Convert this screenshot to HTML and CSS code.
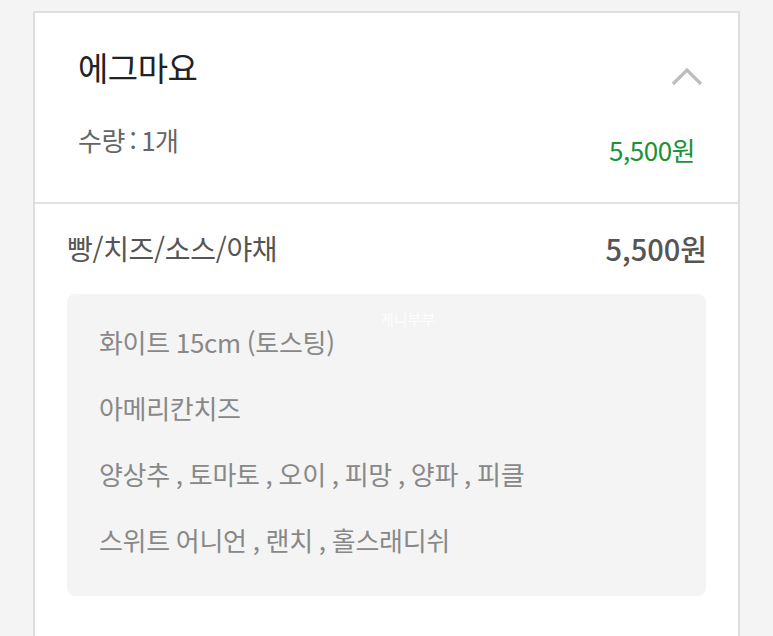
FILE: index.html
```html
<!DOCTYPE html>
<html lang="ko">
<head>
    <meta charset="UTF-8">
    <meta name="viewport" content="width=device-width, initial-scale=1.0">
    <title>주문 상세</title>
    <link rel="stylesheet" href="styles.css">
</head>
<body>
    <div class="order-card">
        <div class="summary">
            <div class="summary-top">
                <h2 class="menu-name">에그마요</h2>
                <svg class="toggle" width="34" height="22" viewBox="0 0 34 22">
                    <polyline points="3,19 17,5 31,19" fill="none" stroke="#bdbdbd" stroke-width="3.2"/>
                </svg>
            </div>
            <div class="summary-bottom">
                <p class="qty">수량 : 1개</p>
                <p class="total">5,500원</p>
            </div>
        </div>

        <div class="detail">
            <div class="detail-head">
                <span class="detail-title">빵/치즈/소스/야채</span>
                <span class="detail-price">5,500원</span>
            </div>
            <div class="options">
                <span class="watermark">게니부부</span>
                <p>화이트 15cm (토스팅)</p>
                <p>아메리칸치즈</p>
                <p>양상추 , 토마토 , 오이 , 피망 , 양파 , 피클</p>
                <p>스위트 어니언 , 랜치 , 홀스래디쉬</p>
            </div>
        </div>
    </div>
</body>
</html>
```

FILE: styles.css
```css
body {
    font-family: "Noto Sans CJK KR", "Noto Sans", sans-serif;
    margin: 0;
    padding: 0;
    background-color: #f4f4f4;
    overflow: hidden;
}
.order-card {
    margin: 11px 33px 0 33px;
    background-color: #fff;
    border: 2px solid #dedede;
    border-bottom: none;
    height: 640px;
}
.summary {
    height: 156px;
    padding: 33px 43px 0 43px;
    border-bottom: 2px solid #e2e2e2;
}
.summary-top {
    display: flex;
    justify-content: space-between;
    align-items: flex-start;
}
.menu-name {
    margin: 0;
    font-size: 33px;
    line-height: 42px;
    font-weight: 400;
    letter-spacing: -0.5px;
    color: #222;
}
.toggle {
    margin-top: 19px;
    margin-right: -9px;
}
.summary-bottom {
    display: flex;
    justify-content: space-between;
    align-items: flex-start;
    margin-top: 35px;
}
.qty {
    margin: 0;
    font-size: 26px;
    line-height: 34px;
    letter-spacing: -0.5px;
    word-spacing: -2px;
    color: #666;
}
.total {
    margin: 10px 0 0;
    font-size: 26px;
    line-height: 34px;
    letter-spacing: -0.5px;
    color: #1a9236;
}
.detail {
    padding: 26px 32px 0 32px;
}
.detail-head {
    display: flex;
    justify-content: space-between;
    align-items: center;
    height: 36px;
}
.detail-title {
    font-size: 28px;
    letter-spacing: -0.3px;
    color: #555;
}
.detail-price {
    font-size: 29px;
    font-weight: 500;
    color: #555;
    margin-right: -1px;
}
.options {
    position: relative;
    margin-top: 28px;
    padding: 15px 32px 23px 32px;
    background-color: #f4f4f4;
    border-radius: 8px;
}
.options p {
    margin: 0;
    font-size: 26px;
    line-height: 66px;
    letter-spacing: -0.3px;
    word-spacing: -1px;
    color: #888;
}
.watermark {
    position: absolute;
    left: 313px;
    top: 14px;
    font-size: 15px;
    color: #fff;
    opacity: 0.9;
}
```
